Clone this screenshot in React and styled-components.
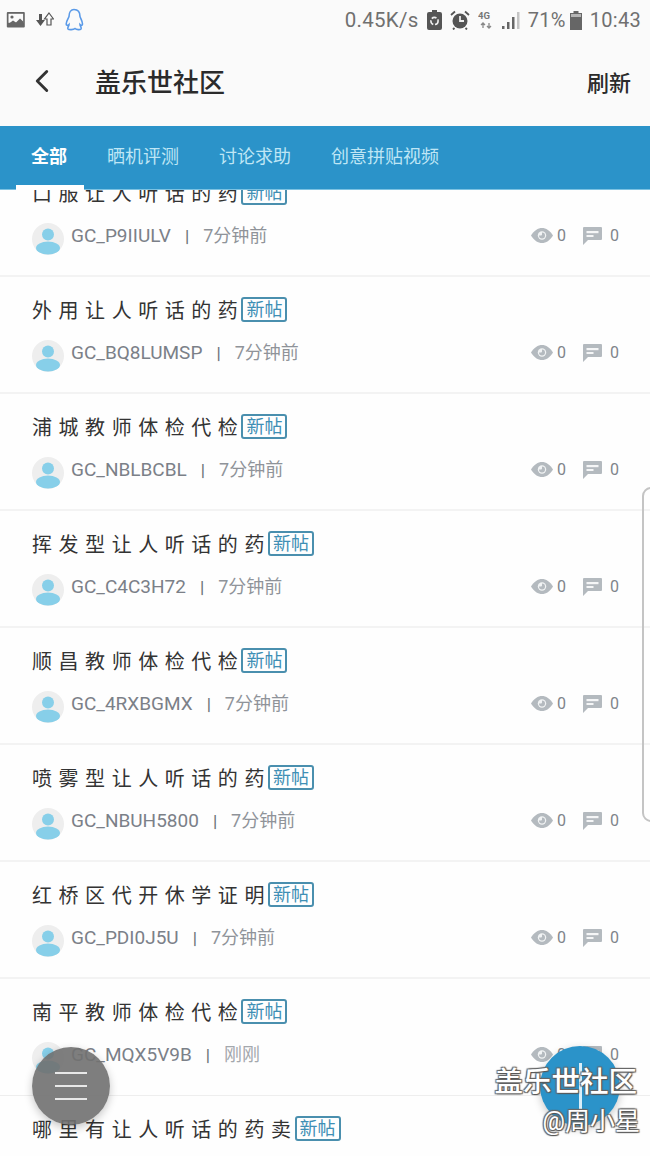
import React from 'react';
import styled, { createGlobalStyle } from 'styled-components';
import { ChevronLeft } from 'lucide-react';

const Global = createGlobalStyle`
  html, body { margin: 0; padding: 0; background: #fff; }
  * { box-sizing: border-box; }
`;
const CJK = `Roboto, "Noto Sans CJK SC", sans-serif`;

const Page = styled.div`
  position: relative; width: 650px; height: 1156px; overflow: hidden;
  display: flex; flex-direction: column; background: #fefefe; font-family: ${CJK};
`;
const Top = styled.div`background: #fafafa; height: 126px; flex: none; display: flex; flex-direction: column;`;
const StatusBar = styled.div`
  height: 40px; display: flex; align-items: center; justify-content: space-between;
  padding: 0 9px 0 6px; color: #6f6f6f;
`;
const StatusGroup = styled.div`display: flex; align-items: center; gap: ${p => p.$gap || 6}px;`;
const StatusText = styled.span`
  font-size: ${p => p.$size || 20}px; line-height: 24px; color: #707070; letter-spacing: .3px;
  margin-right: ${p => p.$mr || 0}px;
`;
const Header = styled.div`
  flex: 1; display: flex; align-items: center; padding: 0 19px 5px 23px;
`;
const Back = styled.div`width: 72px; height: 38px; display: flex; align-items: center; color: #333;`;
const Title = styled.div`flex: 1; font-size: 26px; font-weight: 500; color: #2b2b2b;`;
const Refresh = styled.div`font-size: 22px; font-weight: 500; color: #2b2b2b;`;
const Tabs = styled.div`
  position: relative; z-index: 2; height: 64px; flex: none; background: #2b93c9;
  display: flex; align-items: center; padding: 0 0 2px 31px; gap: 40px;
  border-bottom: 1px solid #7cc2e2;
`;
const Tab = styled.div`
  font-size: 18px; line-height: 24px; color: ${p => p.$active ? '#fff' : '#bfe6f5'};
  font-weight: ${p => p.$active ? 700 : 400};
`;
const Indicator = styled.div`position: absolute; left: 16px; bottom: -1px; width: 68px; height: 5px; background: #fff;`;
const List = styled.div`flex: 1; overflow: hidden;`;
const Scroller = styled.div`margin-top: -30px;`;
const Row = styled.div`
  height: 117px; padding: 20px 31px 0 32px;
  border-bottom: ${p => p.$thin ? '1px solid #eee' : '2px solid #f3f3f3'};
`;
const TitleLine = styled.div`display: flex; align-items: center; height: 28px;`;
const PostTitle = styled.div`font-size: 20px; line-height: 28px; letter-spacing: 6.55px; color: #333; margin-right: -3px;`;
const Badge = styled.span`
  width: 46px; height: 25px; margin-top: -3px; border: 2px solid #4a8fae; border-radius: 3px; color: #3f8fb5;
  font-size: 18px; line-height: 21px; text-align: center; flex: none; white-space: nowrap;
`;
const Meta = styled.div`display: flex; align-items: center; height: 32px; margin-top: 12px;`;
const Avatar = styled.svg`width: 32px; height: 32px; flex: none; margin: 6px 7px 0 0;`;
const User = styled.span`font-size: 19px; line-height: 24px; color: #7b8088;`;
const Sep = styled.span`font-size: 17px; line-height: 24px; font-weight: 500; color: #6f747b; margin: 0 14px;`;
const Time = styled.span`font-size: 18px; line-height: 24px; margin-top: -1px; color: ${p => p.$light ? '#a4a8ad' : '#8f9399'};`;
const Stats = styled.div`margin: -1px 0 0 auto; display: flex; align-items: center; color: #7f858b; font-size: 16px;`;
const Count = styled.span`margin-left: ${p => p.$ml}px; margin-right: ${p => p.$mr || 0}px;`;
const ScrollHandle = styled.div`
  position: absolute; left: 642px; top: 487px; width: 12px; height: 335px;
  border: 2px solid #c4c4c4; border-radius: 9px 0 0 9px; z-index: 3;
`;
const Fab = styled.div`
  position: absolute; top: ${p => p.$top}px; left: ${p => p.$left}px; width: ${p => p.$d}px; height: ${p => p.$d}px;
  border-radius: 50%; background: ${p => p.$bg}; box-shadow: 0 3px 8px rgba(0,0,0,.22);
  display: flex; flex-direction: column; align-items: center; justify-content: center; z-index: 4;
`;
const Bar = styled.div`width: 32px; height: 2px; background: #e8e8e8; margin: 5.5px 0;`;
const Plus = styled.div`width: 3px; height: 46px; background: #d9eef8;`;
const Watermark = styled.div`
  position: absolute; right: ${p => p.$right}px; top: ${p => p.$top}px; z-index: 5; white-space: nowrap;
  font-size: ${p => p.$size}px; line-height: 1; color: #fff; font-weight: ${p => p.$w};
  text-shadow: 1px 1px 1px #555, -1px -1px 1px #666, 1px -1px 1px #666, -1px 1px 1px #666;
`;

const Img = () => (
  <svg width="20" height="18" viewBox="0 0 20 18"><rect x=".8" y="1" width="18" height="15.5" rx="1" fill="#666" /><rect x="2.5" y="2.8" width="14.6" height="9" fill="#fafafa" /><circle cx="6" cy="6" r="1.6" fill="#666" /><path d="M3 12.5l4-3 3 2 4-4 3.2 3v4H3z" fill="#666" /></svg>
);
const Arrows = () => (
  <svg width="18" height="16" viewBox="0 0 18 16"><path d="M3 2h3v6h3l-4.500 6L0 8h3z" fill="#555" /><path d="M13 1l4.500 6H15v6h-4V7H8.500z" fill="#fafafa" stroke="#555" strokeWidth="1.200" /></svg>
);
const Penguin = () => (
  <svg width="20" height="24" viewBox="0 0 20 24"><path d="M10 1.500c4 0 6 3 6 7 0 1 2.500 4.500 2.500 7.500 0 1.500-1.200 1.800-2.500.5 0 2 2 3 1 4.500-1 1-4.500.8-6-.5-1.500 1.300-6 1.500-7 .5-1-1.500 1-2.500 1-4.500-1.300 1.300-2.800 1-2.800-.5 0-3 2.800-6.500 2.800-7.500 0-4 2-7 5-7z" fill="none" stroke="#5a9ae8" strokeWidth="1.600" /></svg>
);
const BatterySaver = () => (
  <svg width="15" height="20" viewBox="0 0 15 20"><path d="M5 0h5v2h3a2 2 0 0 1 2 2v14a2 2 0 0 1-2 2H2a2 2 0 0 1-2-2V4a2 2 0 0 1 2-2h3z" fill="#555" /><circle cx="7.500" cy="11" r="3.600" fill="none" stroke="#eee" strokeWidth="1.600" strokeDasharray="5 1.800" /></svg>
);
const Alarm = () => (
  <svg width="20" height="20" viewBox="0 0 20 20"><circle cx="10" cy="11" r="7.500" fill="#555" /><path d="M10 6v5h4" fill="none" stroke="#eee" strokeWidth="1.800" /><path d="M1 5l4-3.500M19 5l-4-3.500M4.500 18L3 19.500M15.500 18l1.500 1.500" stroke="#555" strokeWidth="1.800" /></svg>
);
const Net = () => (
  <svg width="16" height="20" viewBox="0 0 16 20"><path d="M5 18v-5M3 15l2-2 2 2M11 13v5M9 16l2 2 2-2" stroke="#888" strokeWidth="1.300" fill="none" /><text x="0" y="9" fontSize="9.500" fontWeight="700" fill="#777" fontFamily="Roboto, sans-serif">4G</text></svg>
);
const Signal = () => (
  <svg width="18" height="18" viewBox="0 0 18 18"><rect x="0" y="15" width="2.500" height="3" fill="#666" /><rect x="5" y="11" width="2.500" height="7" fill="#666" /><rect x="10" y="6" width="2.500" height="12" fill="#666" /><rect x="15" y="1" width="2.500" height="17" fill="#c4c4c4" /></svg>
);
const Battery = () => (
  <svg width="12" height="19" viewBox="0 0 12 19"><path d="M3.500 0h5v2H12v17H0V2h3.500z" fill="#666" /><rect x="1" y="3" width="10" height="3" fill="#b5b5b5" /></svg>
);
const UserIcon = () => (
  <Avatar viewBox="0 0 32 32">
    <circle cx="16" cy="16" r="16" fill="#eeeeee" />
    <circle cx="16" cy="11.500" r="6" fill="#87cfe9" />
    <ellipse cx="16" cy="25" rx="12" ry="6.500" fill="#87cfe9" />
  </Avatar>
);
const Eye = () => (
  <svg width="22" height="15" viewBox="0 0 22 15"><path d="M0 7.500C3 2.500 7 0 11 0s8 2.500 11 7.500C19 12.500 15 15 11 15S3 12.500 0 7.500z" fill="#b4babf" /><circle cx="11" cy="7.500" r="4.200" fill="#f1f3f4" /><path d="M11 4.500a3 3 0 1 1-3 3h2a1 1 0 0 0 1-1z" fill="#b4babf" /></svg>
);
const Comment = () => (
  <svg width="19" height="18" viewBox="0 0 19 18"><path d="M1 0h17a1 1 0 0 1 1 1v11a1 1 0 0 1-1 1H5l-5 5V1a1 1 0 0 1 1-1z" fill="#b4babf" /><rect x="3.500" y="4" width="12" height="2.200" fill="#f5f6f7" /><rect x="3.500" y="8" width="7" height="2" fill="#f5f6f7" /></svg>
);

const posts = [
  ['口服让人听话的药', 'GC_P9IIULV', '7分钟前'],
  ['外用让人听话的药', 'GC_BQ8LUMSP', '7分钟前'],
  ['浦城教师体检代检', 'GC_NBLBCBL', '7分钟前'],
  ['挥发型让人听话的药', 'GC_C4C3H72', '7分钟前'],
  ['顺昌教师体检代检', 'GC_4RXBGMX', '7分钟前'],
  ['喷雾型让人听话的药', 'GC_NBUH5800', '7分钟前'],
  ['红桥区代开休学证明', 'GC_PDI0J5U', '7分钟前'],
  ['南平教师体检代检', 'GC_MQX5V9B', '刚刚'],
  ['哪里有让人听话的药卖', '', ''],
];

export default function App() {
  return (
    <Page>
      <Global />
      <Top>
        <StatusBar>
          <StatusGroup $gap={10}><Img /><Arrows /><Penguin /></StatusGroup>
          <StatusGroup $gap={8}>
            <StatusText $size={20.5}>0.45K/s</StatusText><BatterySaver /><Alarm /><Net /><Signal />
            <StatusText $mr={-4}>71%</StatusText><Battery /><StatusText>10:43</StatusText>
          </StatusGroup>
        </StatusBar>
        <Header>
          <Back><ChevronLeft size={38} strokeWidth={1.8} /></Back>
          <Title>盖乐世社区</Title>
          <Refresh>刷新</Refresh>
        </Header>
      </Top>
      <Tabs>
        <Tab $active>全部</Tab><Tab>晒机评测</Tab><Tab>讨论求助</Tab><Tab>创意拼贴视频</Tab>
        <Indicator />
      </Tabs>
      <List>
        <Scroller>
          {posts.map(([title, user, time], i) => (
            <Row key={i} $thin={i === 7}>
              <TitleLine><PostTitle>{title}</PostTitle><Badge>新帖</Badge></TitleLine>
              {user && (
                <Meta>
                  <UserIcon />
                  <User>{user}</User><Sep>|</Sep><Time $light={time === '刚刚'}>{time}</Time>
                  <Stats>
                    <Eye /><Count $ml={4} $mr={17}>0</Count><Comment /><Count $ml={8}>0</Count>
                  </Stats>
                </Meta>
              )}
            </Row>
          ))}
        </Scroller>
      </List>
      <ScrollHandle />
      <Fab $left={32} $top={1047} $d={78} $bg="rgba(112,112,112,.9)"><Bar /><Bar /><Bar /></Fab>
      <Fab $left={540} $top={1046} $d={80} $bg="#2b93c9"><Plus /></Fab>
      <Watermark $right={13} $top={1069} $size={28.5} $w={500}>盖乐世社区</Watermark>
      <Watermark $right={10} $top={1109} $size={25} $w={400}>@周小星</Watermark>
    </Page>
  );
}
